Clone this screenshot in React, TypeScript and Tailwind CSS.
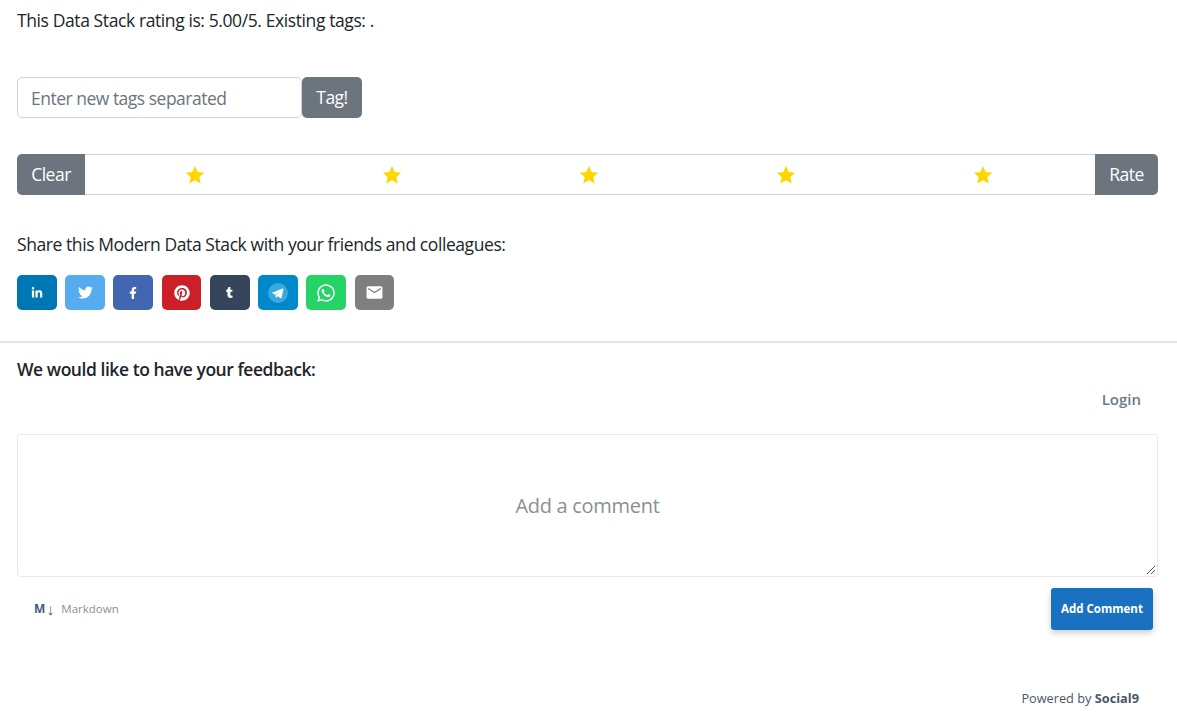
import React from "react";
import { FaLinkedinIn, FaTwitter, FaFacebookF, FaPinterest, FaTumblr, FaWhatsapp } from "react-icons/fa";
import { MdEmail } from "react-icons/md";

const Star = () => (
  <svg width="20" height="20" viewBox="0 0 24 24" className="block">
    <path fill="#ffd700" d="M12 1.200l3.200 7.200 7.900.8-5.900 5.300 1.700 7.800L12 18.300l-6.900 4 1.700-7.800L.9 9.200l7.900-.8z" />
  </svg>
);

const Telegram = () => (
  <svg width="20" height="20" viewBox="0 0 20 20" className="block">
    <circle cx="10" cy="10" r="10" fill="#39a9e0" />
    <path fill="#fff" d="M4 9.800l10.600-4.300c.5-.2.900.1.800.8l-1.800 8.500c-.1.600-.5.700-1 .4l-2.700-2-1.300 1.300c-.2.200-.4.300-.6 0l-.4-2.800-2.700-.9c-.6-.2-.6-.5.100-.8z" />
    <path fill="#a8d8f0" d="M8.200 12.300l4.700-4.300-5.700 3.500.4 2.900z" />
  </svg>
);

const shares = [
  { c: "bg-[#0077b5]", i: <FaLinkedinIn size={12} /> },
  { c: "bg-[#55acee]", i: <FaTwitter size={15} /> },
  { c: "bg-[#4267b2]", i: <FaFacebookF size={12} /> },
  { c: "bg-[#cb2027]", i: <FaPinterest size={16} /> },
  { c: "bg-[#35465c]", i: <FaTumblr size={11} /> },
  { c: "bg-[#0088cc]", i: <Telegram /> },
  { c: "bg-[#25d366]", i: <FaWhatsapp size={20} /> },
  { c: "bg-[#7f7f7f]", i: <MdEmail size={19} /> },
];

export default function App() {
  return (
    <div className="bg-white h-[723px] overflow-hidden text-[#212529] font-['Open_Sans','Noto_Sans',sans-serif]">
      <div className="pl-[17px] pr-[19px]">
        <p className="pt-[8px] h-[77px] text-[17.500px] leading-[24px] tracking-[-0.4px]">
          This Data Stack rating is: 5.00/5. Existing tags: .
        </p>
        <div className="flex h-[41px]">
          <input
            placeholder="Enter new tags separated"
            className="w-[285px] h-[41px] px-[13px] text-[17.500px] tracking-[-0.5px] border border-[#ced4da] rounded-[5px] placeholder:text-[#6c757d] outline-none"
          />
          <button className="w-[60px] bg-[#6c757d] text-white text-[17.500px] tracking-[-0.5px] rounded-[5px]">Tag!</button>
        </div>
        <div className="flex h-[41px] mt-[36px]">
          <button className="w-[68px] bg-[#6c757d] text-white text-[17.500px] tracking-[-0.5px] rounded-l-[5px]">Clear</button>
          <div className="flex-1 grid grid-cols-5 border-y border-[#ced4da] pl-[11.500px] pr-[13px]">
            {[0, 1, 2, 3, 4].map((s) => (
              <div key={s} className="flex items-center justify-center"><Star /></div>
            ))}
          </div>
          <button className="w-[63px] bg-[#6c757d] text-white text-[17.500px] tracking-[-0.5px] rounded-r-[5px]">Rate</button>
        </div>
        <p className="mt-[36px] text-[17.500px] leading-[26px] tracking-[-0.42px]">
          Share this Modern Data Stack with your friends and colleagues:
        </p>
        <div className="flex gap-[8.650px] mt-[18px]">
          {shares.map((s, k) => (
            <div key={k} className={`w-[39.600px] h-[35px] rounded-[5px] text-white flex items-center justify-center ${s.c}`}>{s.i}</div>
          ))}
        </div>
      </div>
      <hr className="mt-[31px] border-t-2 border-[#e2e4e6]" />
      <div className="pl-[17px] pr-[19px]">
        <h3 className="mt-[13px] text-[17.500px] leading-[26px] font-semibold tracking-[-0.45px]">We would like to have your feedback:</h3>
        <div className="flex justify-end pr-[17px] mt-[4px] text-[15px] leading-[26px] font-semibold text-[#6c7a89]">Login</div>
        <div className="relative mt-[22px] h-[143px] border border-[#e8e9eb] rounded-[3px] flex items-center justify-center">
          <span className="text-[20px] text-[#8a8f94] tracking-[-0.3px]">Add a comment</span>
          <svg width="10" height="10" viewBox="0 0 10 10" className="absolute right-[1px] bottom-[1px]">
            <path d="M9 1L1 9M9 5L5 9" stroke="#555" strokeWidth="1" />
          </svg>
        </div>
        <div className="flex items-center justify-between pl-[17px] pr-[5px] mt-[11px]">
          <div className="flex items-center">
            <span className="text-[12px] font-bold text-[#4a5a7a]">M</span>
            <span className="text-[16px] leading-[14px] text-[#4a6a9a] ml-[1px]">↓</span>
            <span className="text-[11.500px] text-[#8a8f98] ml-[7px]">Markdown</span>
          </div>
          <button className="w-[102px] h-[42px] rounded-[3px] bg-[#1a71c2] text-white text-[11.500px] font-bold shadow-[0_3px_6px_rgba(0,0,0,0.2)]">Add Comment</button>
        </div>
        <div className="flex justify-end pr-[19px] mt-[59px] text-[12.750px] leading-[18px] text-[#4a5568]">
          <span>Powered by <b className="font-bold">Social9</b></span>
        </div>
      </div>
    </div>
  );
}
